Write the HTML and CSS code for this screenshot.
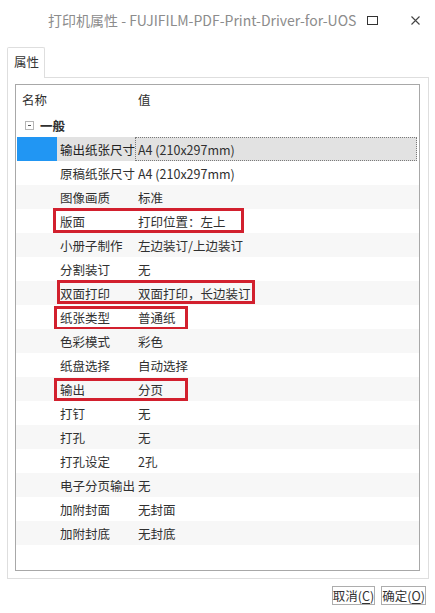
FILE: index.html
```html
<!DOCTYPE html>
<html lang="zh-CN">
<head>
<meta charset="utf-8">
<title>打印机属性</title>
<link rel="stylesheet" href="styles.css">
</head>
<body>
<div class="window">
  <div class="titlebar">
    <span class="title">打印机属性 - FUJIFILM-PDF-Print-Driver-for-UOS</span>
    <span class="tb-btn max"><svg width="11" height="9" viewBox="0 0 11 9"><rect x="0.5" y="0.5" width="10" height="8" fill="none" stroke="#333" stroke-width="1"/></svg></span>
    <span class="tb-btn close"><svg width="9" height="9" viewBox="0 0 9 9"><path d="M0.5 0.5 L8.5 8.5 M8.5 0.5 L0.5 8.5" stroke="#444" stroke-width="1.1" fill="none"/></svg></span>
  </div>
  <div class="tabs">
    <div class="tab">属性</div>
  </div>
  <div class="pane">
    <div class="tree">
      <div class="hdr">
        <span class="c-name">名称</span>
        <span class="c-val">值</span>
      </div>
      <div class="group"><span class="toggle"></span><b>一般</b></div>
      <div class="row alt sel"><span class="ind"></span><span class="nm">输出纸张尺寸</span><span class="vl">A4 (210x297mm)</span></div>
      <div class="row"><span class="ind"></span><span class="nm">原稿纸张尺寸</span><span class="vl">A4 (210x297mm)</span></div>
      <div class="row alt"><span class="ind"></span><span class="nm">图像画质</span><span class="vl">标准</span></div>
      <div class="row"><span class="ind"></span><span class="nm">版面</span><span class="vl">打印位置：左上</span><span class="mark m1"></span></div>
      <div class="row alt"><span class="ind"></span><span class="nm">小册子制作</span><span class="vl">左边装订/上边装订</span></div>
      <div class="row"><span class="ind"></span><span class="nm">分割装订</span><span class="vl">无</span></div>
      <div class="row alt"><span class="ind"></span><span class="nm">双面打印</span><span class="vl">双面打印，长边装订</span><span class="mark m2"></span></div>
      <div class="row"><span class="ind"></span><span class="nm">纸张类型</span><span class="vl">普通纸</span><span class="mark m3"></span></div>
      <div class="row alt"><span class="ind"></span><span class="nm">色彩模式</span><span class="vl">彩色</span></div>
      <div class="row"><span class="ind"></span><span class="nm">纸盘选择</span><span class="vl">自动选择</span></div>
      <div class="row alt"><span class="ind"></span><span class="nm">输出</span><span class="vl">分页</span><span class="mark m4"></span></div>
      <div class="row"><span class="ind"></span><span class="nm">打钉</span><span class="vl">无</span></div>
      <div class="row alt"><span class="ind"></span><span class="nm">打孔</span><span class="vl">无</span></div>
      <div class="row"><span class="ind"></span><span class="nm">打孔设定</span><span class="vl">2孔</span></div>
      <div class="row alt"><span class="ind"></span><span class="nm">电子分页输出</span><span class="vl">无</span></div>
      <div class="row"><span class="ind"></span><span class="nm">加附封面</span><span class="vl">无封面</span></div>
      <div class="row alt"><span class="ind"></span><span class="nm">加附封底</span><span class="vl">无封底</span></div>
    </div>
  </div>
  <div class="buttons">
    <button class="btn">取消(<u>C</u>)</button>
    <button class="btn">确定(<u>O</u>)</button>
  </div>
</div>
</body>
</html>
```
FILE: styles.css
```css
html, body {
  margin: 0;
  padding: 0;
  background: #ffffff;
}
body {
  font-family: "Noto Sans CJK SC", "Noto Sans", sans-serif;
  color: #303030;
  font-size: 12.5px;
}
.window {
  width: 435px;
  height: 613px;
  display: flex;
  flex-direction: column;
  box-sizing: border-box;
}
.titlebar {
  height: 40px;
  display: flex;
  align-items: center;
  flex-shrink: 0;
}
.title {
  margin-left: 48px;
  font-size: 14px;
  color: #8c8c8c;
  white-space: nowrap;
  letter-spacing: 0;
  width: 318px;
}
.tb-btn {
  display: flex;
  align-items: center;
  justify-content: center;
}
.max {
  margin-left: 1px;
  width: 11px;
}
.close {
  margin-left: 33px;
  width: 9px;
}
.tabs {
  display: flex;
  padding-left: 7px;
  height: 37px;
  align-items: flex-end;
  flex-shrink: 0;
}
.tab {
  width: 38px;
  height: 31px;
  box-sizing: border-box;
  border: 1px solid #dedede;
  border-bottom: none;
  border-radius: 2px 2px 0 0;
  background: #fff;
  font-size: 12.5px;
  padding-left: 6px;
  line-height: 28px;
  color: #333;
  position: relative;
  top: 1px;
}
.pane {
  margin: 0 6px 0 7px;
  height: 502px;
  border: 1px solid #dedede;
  box-sizing: border-box;
  padding: 6px 8px 7px 7px;
  display: flex;
}
.tree {
  flex: 1;
  border: 1px solid #a8a8a8;
  background: #fff;
  display: flex;
  flex-direction: column;
}
.hdr {
  height: 28px;
  display: flex;
  align-items: center;
}
.c-name {
  width: 119px;
  padding-left: 6px;
  box-sizing: border-box;
}
.c-val {
  padding-left: 3px;
}
.group {
  height: 24px;
  display: flex;
  align-items: center;
  padding-left: 9px;
}
.group b {
  font-weight: bold;
  margin-left: 6px;
}
.toggle {
  width: 9px;
  height: 9px;
  border: 1px solid #b5b5b5;
  box-sizing: border-box;
  position: relative;
  background: #fff;
}
.toggle::after {
  content: "";
  position: absolute;
  left: 2px;
  top: 3px;
  width: 3px;
  height: 1px;
  background: #555;
}
.row {
  height: 24px;
  display: flex;
  align-items: center;
  position: relative;
}
.row.alt {
  background: #f7f7f7;
}
.ind {
  width: 41px;
  align-self: stretch;
  flex-shrink: 0;
}
.nm {
  width: 78px;
  padding-left: 3px;
  box-sizing: border-box;
  white-space: nowrap;
  flex-shrink: 0;
}
.vl {
  padding-left: 3px;
  white-space: nowrap;
}
.row.sel {
  background: #fff;
  height: 24px;
  align-items: stretch;
}
.row.sel .ind {
  background: #2196f3;
  margin: 0 0 0 1px;
  width: 40px;
}
.row.sel .nm {
  background: #e2e2e2;
  display: flex;
  align-items: center;
  color: #222;
}
.row.sel .vl {
  flex: 1;
  background: #e2e2e2;
  border: 1px dotted #7a7a7a;
  display: flex;
  align-items: center;
  margin-right: 2px;
  padding-left: 2px;
}
.mark {
  position: absolute;
  border: 3px solid #d2202e;
  box-sizing: border-box;
}
.m1 { left: 37px; top: -1px; width: 191px; height: 25px; }
.m2 { left: 41px; top: -1px; width: 198px; height: 24px; }
.m3 { left: 38px; top: 1px; width: 134px; height: 24px; }
.m4 { left: 38px; top: 1px; width: 134px; height: 23px; }
.buttons {
  flex: 1;
  display: flex;
  justify-content: flex-end;
  align-items: flex-start;
  gap: 6px;
  padding: 7px 9px 0 0;
}
.btn {
  font-family: "Noto Sans CJK SC", "Noto Sans", sans-serif;
  font-size: 12.5px;
  color: #333;
  background: #fff;
  border: 1px solid #adadad;
  border-radius: 0;
  height: 19px;
  padding: 0;
  line-height: 16px;
}
.btn u {
  text-underline-offset: 2px;
}
```
